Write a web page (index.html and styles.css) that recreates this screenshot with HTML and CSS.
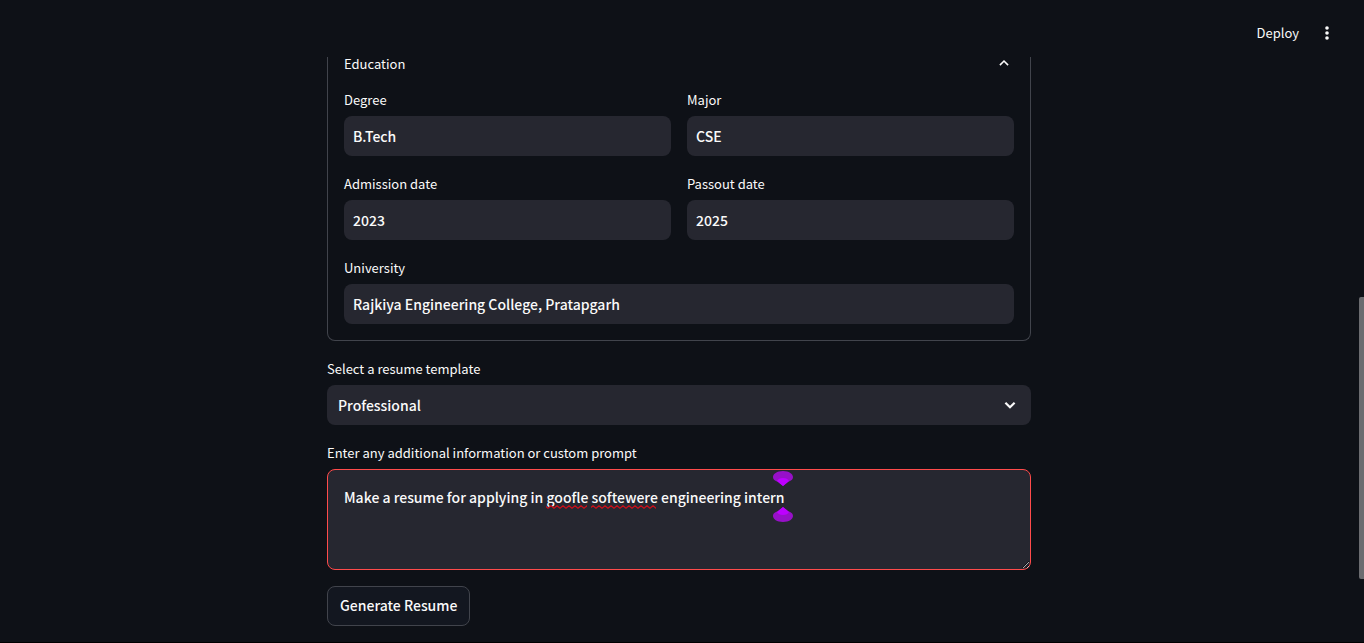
FILE: index.html
```html
<!DOCTYPE html>
<html lang="en">
<head>
<meta charset="utf-8">
<meta name="viewport" content="width=device-width, initial-scale=1">
<title>Resume Builder</title>
<link rel="stylesheet" href="styles.css">
</head>
<body>
<header class="toolbar">
  <button class="toolbar-button" type="button">Deploy</button>
  <button class="toolbar-button menu-button" type="button" aria-label="Main menu">
    <svg width="20" height="20" viewBox="0 0 20 20" fill="currentColor" aria-hidden="true"><circle cx="10" cy="5" r="1.800"/><circle cx="10" cy="10" r="1.800"/><circle cx="10" cy="15" r="1.800"/></svg>
  </button>
</header>
<main class="content">
  <form class="form">
    <details class="expander" open>
      <summary class="expander-title">Education
        <svg width="20" height="14" viewBox="0 0 20 14" fill="none" stroke="currentColor" stroke-width="1.700" aria-hidden="true"><path d="M5.600 8.700 10 4.300l4.400 4.400"/></svg>
      </summary>
      <div class="expander-body">
        <div class="field">
          <label class="label" for="degree">Degree</label>
          <input class="control" id="degree" type="text" value="B.Tech">
        </div>
        <div class="field">
          <label class="label" for="major">Major</label>
          <input class="control" id="major" type="text" value="CSE">
        </div>
        <div class="field">
          <label class="label" for="admission">Admission date</label>
          <input class="control" id="admission" type="text" value="2023">
        </div>
        <div class="field">
          <label class="label" for="passout">Passout date</label>
          <input class="control" id="passout" type="text" value="2025">
        </div>
        <div class="field field-wide">
          <label class="label" for="university">University</label>
          <input class="control" id="university" type="text" value="Rajkiya Engineering College, Pratapgarh">
        </div>
      </div>
    </details>
    <div class="field">
      <label class="label" for="template">Select a resume template</label>
      <div class="select-box">
        <select class="control select" id="template"><option>Professional</option></select>
        <svg class="select-arrow" width="20" height="20" viewBox="0 0 20 20" fill="none" stroke="currentColor" stroke-width="2.200" aria-hidden="true"><path d="M5.400 7.700 10 12.200l4.600-4.500"/></svg>
      </div>
    </div>
    <div class="field">
      <label class="label" for="prompt">Enter any additional information or custom prompt</label>
      <div class="prompt-box">
        <textarea class="control prompt" id="prompt" spellcheck="false">Make a resume for applying in goofle softewere engineering intern</textarea>
        <svg class="prompt-marks" width="460" height="56" viewBox="0 0 460 56" aria-hidden="true">
          <defs><pattern id="wave" width="6" height="4" patternUnits="userSpaceOnUse" y="35"><path d="M-1 2.400 0 3.200 3 .8 6 3.200 7 2.400" fill="none" stroke="#d00d18" stroke-width="1.200"/></pattern></defs>
          <rect x="202" y="35" width="41" height="4" fill="url(#wave)"/>
          <rect x="247" y="35" width="65" height="4" fill="url(#wave)"/>
          <path d="M429 7c0-3 4-6 10-6s10 3 10 6c0 3-3 4-5 5l-5 4-5-4c-2-1-5-2-5-5Z" fill="#9710c8"/>
          <path d="m439 16-6-5c1-2 3-3 6-3s5 1 6 3Z" fill="#bd00ff"/>
          <path d="M429 46c0 3 4 6 10 6s10-3 10-6c0-3-3-4-5-5l-5-4-5 4c-2 1-5 2-5 5Z" fill="#9710c8"/>
          <path d="m439 37-6 5c1 2 3 3 6 3s5-1 6-3Z" fill="#bd00ff"/>
        </svg>
      </div>
    </div>
    <button class="submit" type="button">Generate Resume</button>
  </form>
</main>
<div class="scroll-thumb"></div>
</body>
</html>
```
FILE: styles.css
```css
* {
  box-sizing: border-box;
}

body {
  display: flex;
  flex-direction: column;
  min-height: 100vh;
  margin: 0;
  border-bottom: 1px solid #000;
  background: #0e1117;
  color: #fafafa;
  font-family: "Noto Sans CJK SC", "Noto Sans", sans-serif;
  font-size: 14px;
  font-weight: 500;
  line-height: 24px;
}

button,
input,
select,
textarea {
  margin: 0;
  color: inherit;
  font: inherit;
}

.toolbar {
  display: flex;
  justify-content: flex-end;
  align-items: center;
  gap: 18px;
  padding: 21px 27px 12px 16px;
}

.toolbar-button {
  display: flex;
  padding: 0;
  border: 0;
  background: none;
  font-size: 13px;
  font-weight: 400;
}

.content {
  flex: 1;
  padding: 0 22px 0 16px;
}

.form {
  display: flex;
  flex-direction: column;
  gap: 16px;
  max-width: 704px;
  margin: 0 auto;
}

.expander {
  padding: 0 16px 16px;
  border: 1px solid #41444c;
  border-top: 0;
  border-radius: 0 0 8px 8px;
}

.expander-title {
  display: flex;
  justify-content: space-between;
  align-items: center;
  margin-bottom: 18px;
  font-size: 13px;
  font-weight: 400;
  line-height: 13px;
  list-style: none;
}

.expander-title svg {
  height: 13px;
}

.expander-body {
  display: grid;
  grid-template-columns: 1fr 1fr;
  gap: 16px;
}

.field-wide {
  grid-column: 1 / -1;
}

.label {
  display: block;
  margin-bottom: 4px;
  font-size: 13px;
  font-weight: 400;
}

.control {
  display: block;
  width: 100%;
  height: 40px;
  padding: 0 9px;
  border: 0;
  border-radius: 8px;
  outline: 0;
  background: #262730;
}

.select-box,
.prompt-box {
  position: relative;
}

.select {
  padding: 0 11px;
  appearance: none;
}

.select-arrow {
  position: absolute;
  top: 10px;
  right: 11px;
  pointer-events: none;
}

.prompt {
  height: 101px;
  padding: 15px 16px;
  border: 1px solid #ff4b4b;
  resize: vertical;
}

.prompt-marks {
  position: absolute;
  top: 1px;
  left: 17px;
  pointer-events: none;
}

.submit {
  align-self: flex-start;
  height: 40px;
  padding: 0 12px 2px;
  border: 1px solid #41444c;
  border-radius: 8px;
  background: #131720;
}

.scroll-thumb {
  position: fixed;
  top: 297px;
  right: 0;
  width: 5px;
  height: 282px;
  border-radius: 2px 0 0 2px;
  background: #6b6c70;
}
```
